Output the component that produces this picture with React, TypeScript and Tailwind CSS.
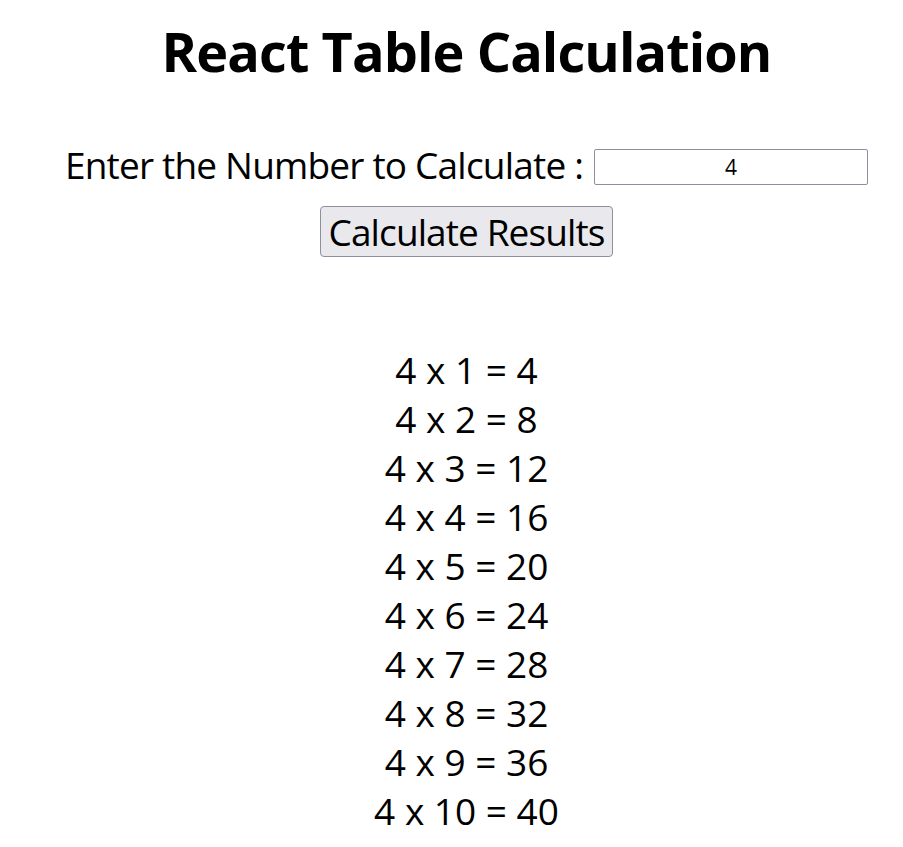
import { useState } from "react"

const font = { fontFamily: '"Open Sans", "Noto Sans", sans-serif' }

export default function App() {
	const [value, setValue] = useState("4")
	const [num, setNum] = useState(4)

	const rows = Array.from({ length: 10 }, (_, i) => i + 1)

	return (
		<div className="min-h-screen bg-white pl-[30px] text-black" style={font}>
			<div className="flex flex-col items-center">
				<h1 className="mt-[19px] text-[54px] leading-[64px] font-bold tracking-[-0.9px] whitespace-nowrap">
					React Table Calculation
				</h1>

				<div className="mt-[58px] flex h-[48px] items-center">
					<label className="text-[37px] leading-[48px] tracking-[-0.8px] whitespace-nowrap">
						Enter the Number to Calculate :
					</label>
					<input
						className="mt-[4px] ml-[11px] h-[36px] w-[274px] rounded-[2px] border border-[#8f8f9d] bg-white text-center text-[21px] outline-none"
						value={value}
						onChange={(e) => setValue(e.target.value)}
					/>
				</div>

				<button
					className="mt-[17px] h-[51px] w-[293px] rounded-[4px] border border-[#8f8f9d] bg-[#e9e9ed] text-[37px] leading-[48px] tracking-[-0.9px] whitespace-nowrap"
					onClick={() => setNum(Number(value) || 0)}
				>
					Calculate Results
				</button>

				<div className="mt-[88px] flex flex-col items-center">
					{rows.map((i) => (
						<div key={i} className="text-[37px] leading-[49px] whitespace-nowrap">
							{num} x {i} = {num * i}
						</div>
					))}
				</div>
			</div>
		</div>
	)
}
